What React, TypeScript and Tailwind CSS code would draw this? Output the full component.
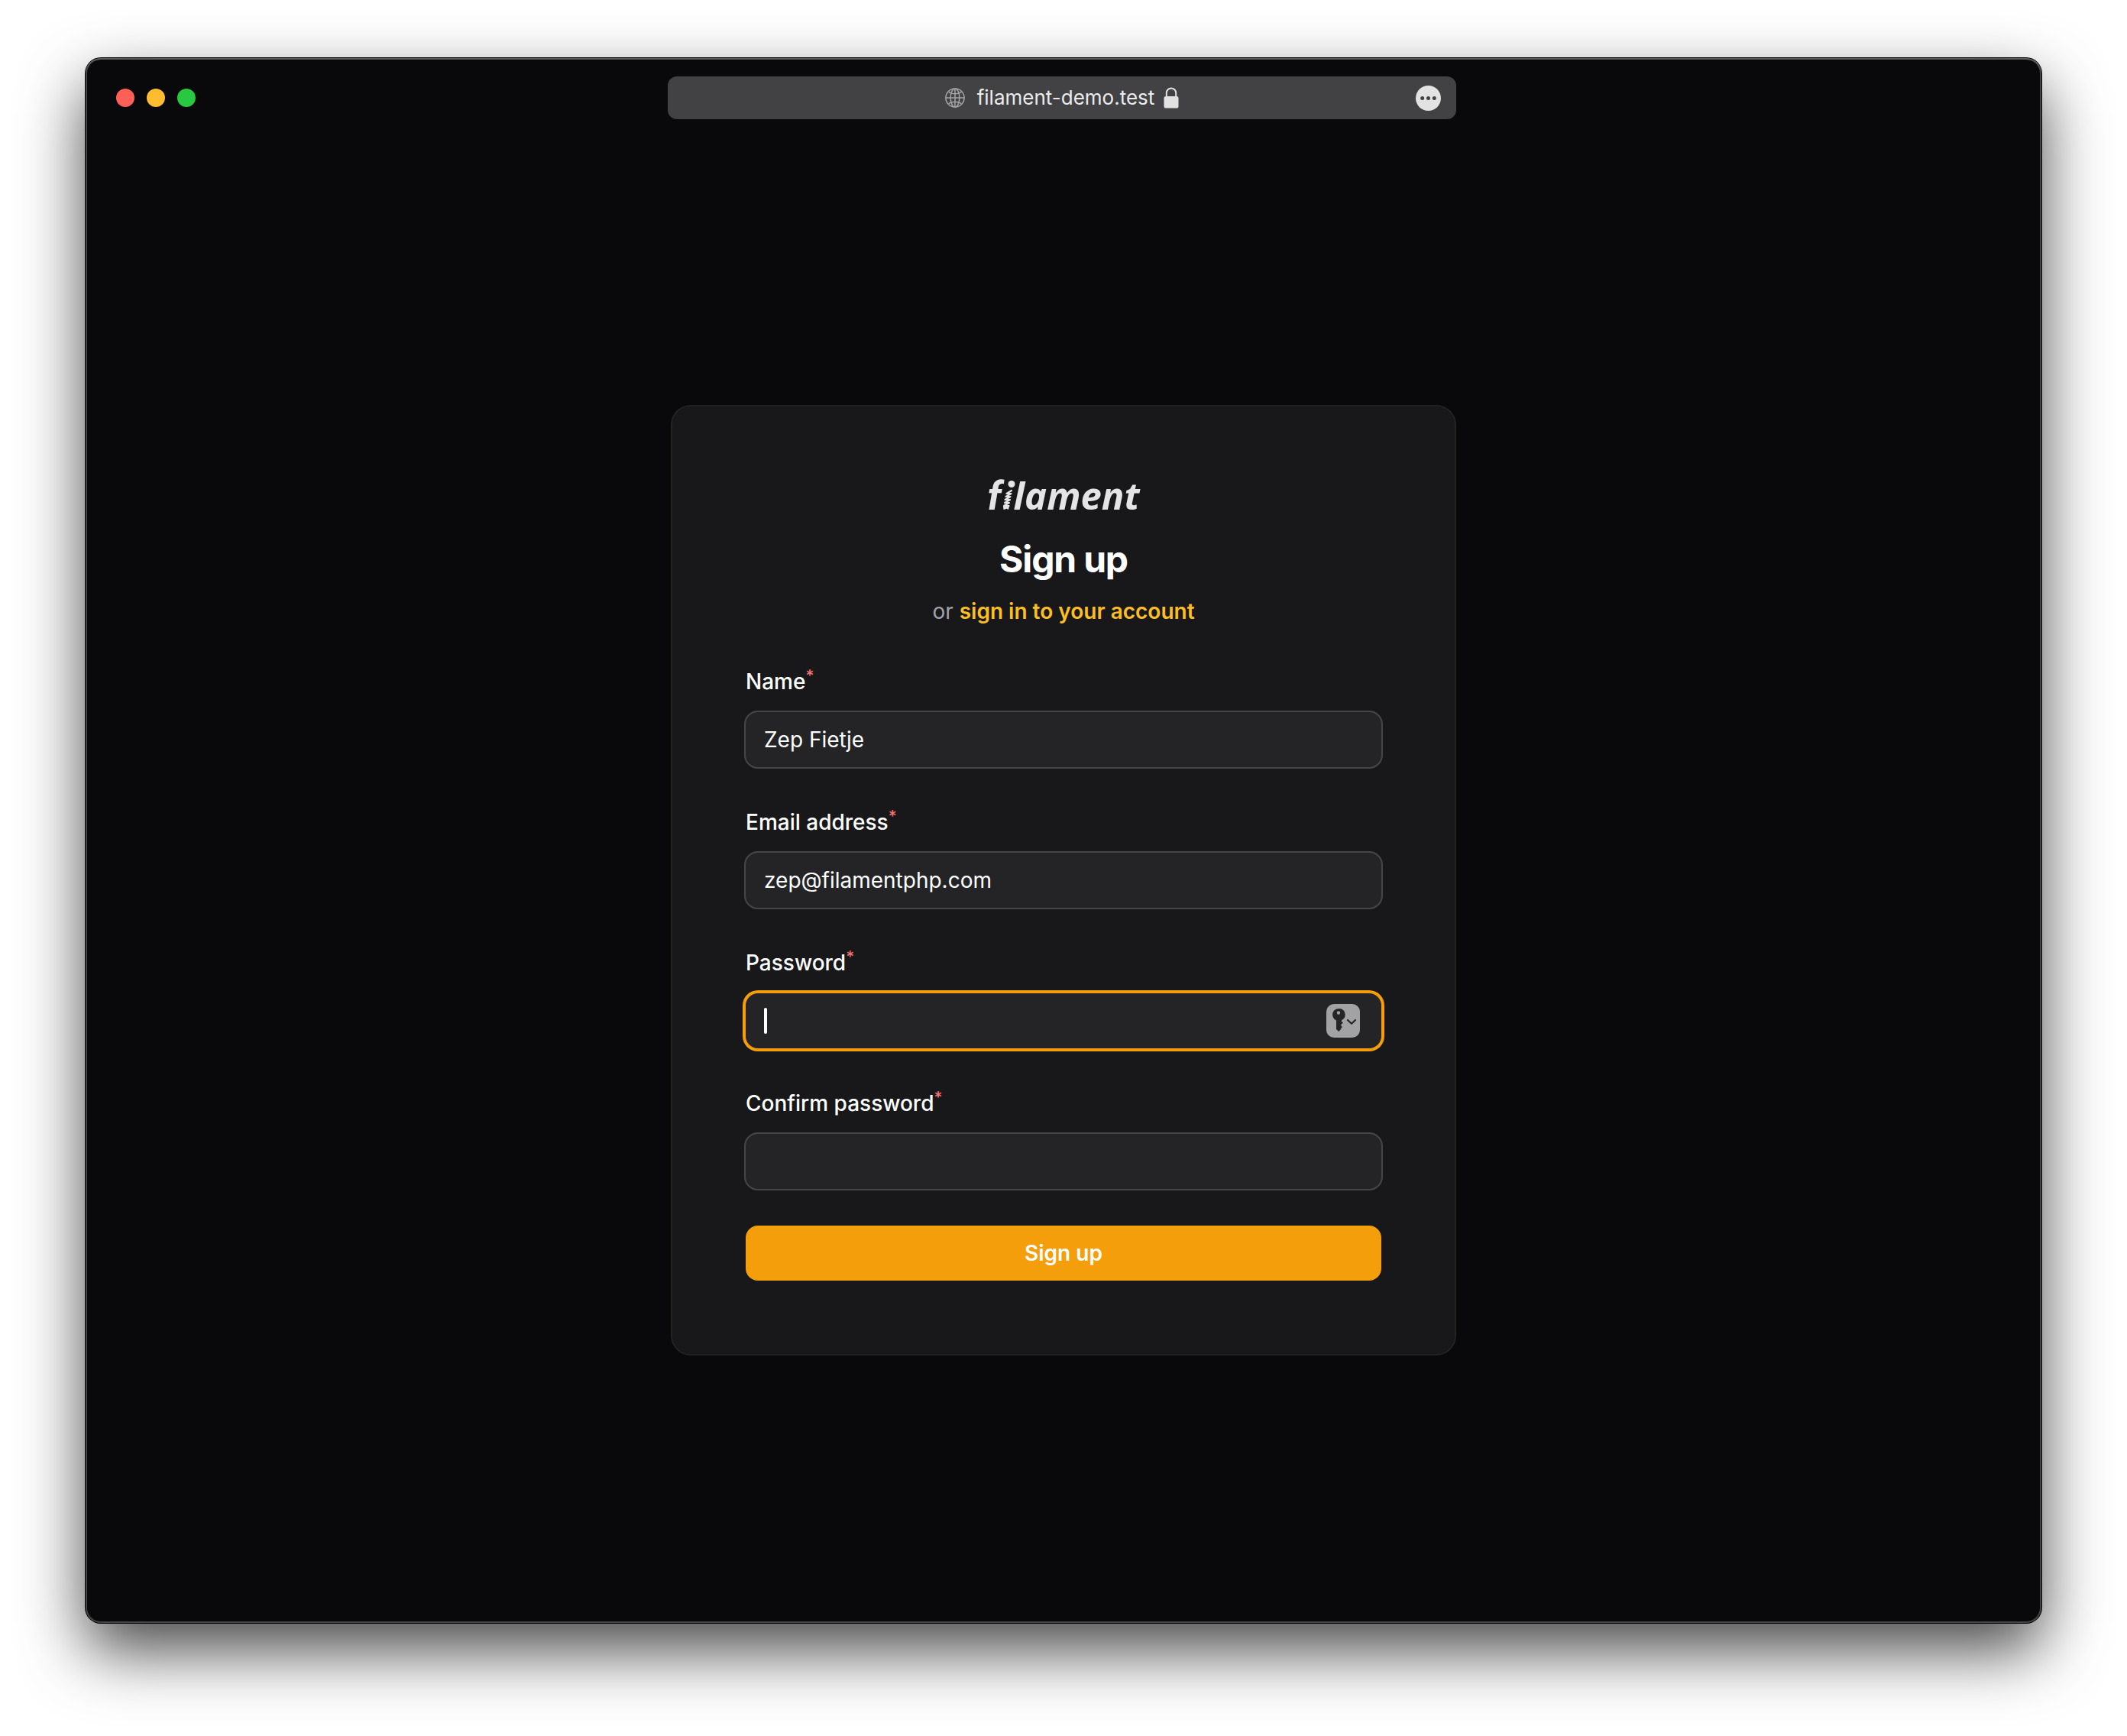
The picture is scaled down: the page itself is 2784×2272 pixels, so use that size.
import type { ReactNode } from "react";

const inputRing = "ring-2 ring-white/20 focus:ring-4 focus:ring-[#f59e0b]";
const activeRing = "ring-4 ring-[#f59e0b]";

function GlobeIcon() {
  return (
    <svg viewBox="0 0 26 26" className="size-[26px] text-[#a4a4a6]" fill="none" stroke="currentColor" strokeWidth="1.5" aria-hidden="true">
      <circle cx="13" cy="13" r="12.1" />
      <ellipse cx="13" cy="13" rx="5.8" ry="12.1" />
      <path d="M13 1v24M1 13h24M4 4.8c2.3 2 5.400 3 9 3s6.700-1 9-3M4 21.200c2.300-2 5.400-3 9-3s6.700 1 9 3" />
    </svg>
  );
}

function LockIcon() {
  return (
    <svg viewBox="0 0 20 28" className="h-7 w-5 text-[#e2e2e3]" aria-hidden="true">
      <path d="M3.800 13V7.600a6.200 6.200 0 0 1 12.400 0V13" fill="none" stroke="currentColor" strokeWidth="2" />
      <rect x="0.500" y="12" width="19" height="15.500" rx="2.600" fill="currentColor" />
    </svg>
  );
}

function MoreIcon() {
  return (
    <svg viewBox="0 0 33 33" className="size-[33px]" aria-hidden="true">
      <circle cx="16.500" cy="16.500" r="16.500" fill="#e2e2e3" />
      <g fill="#424244">
        <circle cx="8.700" cy="16.500" r="2.500" />
        <circle cx="16.500" cy="16.500" r="2.500" />
        <circle cx="24.300" cy="16.500" r="2.500" />
      </g>
    </svg>
  );
}

function KeyIcon() {
  return (
    <svg viewBox="0 0 44 44" className="size-11" aria-hidden="true">
      <path
        fillRule="evenodd"
        fill="#252528"
        d="M16 6a8 8 0 0 0-3 15.400V33l3.200 3 3-3v-1.400l1.800-1.400-1.800-2.200v-1l2.800-2.400-2.500-2.400 1.300-1.400A8 8 0 0 0 16 6Zm0 3.300a2.200 2.200 0 1 1 0 4.400 2.200 2.200 0 0 1 0-4.400Z"
      />
      <path d="m28 21 5 4.800 5-4.800" fill="none" stroke="#252528" strokeWidth="2.200" strokeLinecap="round" strokeLinejoin="round" />
    </svg>
  );
}

function Logo() {
  return (
    <div className="flex h-10 items-baseline justify-center leading-10 text-[#e4e4e7] italic" aria-label="filament">
      <span className="font-['Roboto',sans-serif] text-[52px] font-bold">f</span>
      <svg viewBox="0 0 16 38" className="h-[38px] w-4 overflow-visible" aria-hidden="true">
        <circle cx="13" cy="4.500" r="4.500" fill="currentColor" />
        <path
          d="M13 13 6.500 17 12.500 17 5.500 21 11.500 21 4.500 25 11 25 4 29 10 29 3 33 9.500 33 4 36.500"
          fill="none"
          stroke="currentColor"
          strokeWidth="2.200"
          strokeLinejoin="round"
          strokeLinecap="round"
        />
        <path d="M2 34 6 32.500l4 .5-1 5-3-1.500L2.500 38Z" fill="currentColor" />
      </svg>
      <span className="font-['Open_Sans',sans-serif] text-[49px] font-bold">lament</span>
    </div>
  );
}

type FieldProps = {
  id: string;
  label: string;
  type?: string;
  value?: string;
  active?: boolean;
  children?: ReactNode;
};

function Field({ id, label, type = "text", value, active = false, children }: FieldProps) {
  return (
    <div className="flex flex-col gap-4">
      <label htmlFor={id} className="h-12 text-[28px] leading-[48px] font-medium text-white">
        {label}
        <sup className="text-[21px] leading-none font-medium text-[#f87171]">*</sup>
      </label>
      <div className="relative">
        <input
          id={id}
          type={type}
          defaultValue={value}
          required
          className={`block h-[72px] w-full rounded-2xl bg-[#242427] px-6 text-[28px] leading-[48px] text-white outline-none ${active ? activeRing : inputRing}`}
        />
        {children}
      </div>
    </div>
  );
}

function TitleBar() {
  return (
    <header className="relative flex h-[104px] shrink-0 items-center justify-center pr-1">
      <div className="absolute left-10 flex gap-4">
        <button type="button" aria-label="Close" className="size-6 rounded-full bg-[#ff5f57]" />
        <button type="button" aria-label="Minimize" className="size-6 rounded-full bg-[#febc2e]" />
        <button type="button" aria-label="Zoom" className="size-6 rounded-full bg-[#28c840]" />
      </div>
      <div className="relative flex h-14 w-full max-w-[1032px] items-center justify-center rounded-xl bg-[#424244]">
        <GlobeIcon />
        <span className="mr-3 ml-4 text-[26px] leading-8 text-[#ececed]">filament-demo.test</span>
        <LockIcon />
        <button type="button" aria-label="Page menu" className="absolute right-5">
          <MoreIcon />
        </button>
      </div>
    </header>
  );
}

export default function App() {
  return (
    <div className="flex min-h-screen bg-white px-28 pt-[76px] pb-[148px] font-['Inter',sans-serif] antialiased">
      <div className="flex grow flex-col rounded-[20px] bg-[#09090b] shadow-[inset_0_2px_0_0_#5c5c5e,inset_0_0_0_2px_#444446,0_0_0_1px_#000,0_36px_84px_rgba(0,0,0,0.72)]">
        <TitleBar />
        <main className="flex grow items-center justify-center">
          <section className="w-full max-w-[1024px] rounded-3xl bg-[#18181b] p-24 ring-2 ring-white/10">
            <Logo />
            <h1 className="mt-8 text-center text-[48px] leading-[64px] font-bold tracking-tight text-white">Sign up</h1>
            <p className="mt-4 text-center text-[28px] leading-10 text-[#a1a1aa]">
              or{" "}
              <a href="#login" className="font-semibold text-[#fbbf24]">
                sign in to your account
              </a>
            </p>
            <form className="mt-12 flex flex-col gap-12" onSubmit={(event) => event.preventDefault()}>
              <Field id="name" label="Name" value="Zep Fietje" />
              <Field id="email" label="Email address" type="email" value="zep@filamentphp.com" />
              <Field id="password" label="Password" type="password" active>
                <span className="absolute top-[19px] left-6 h-[34px] w-1 rounded-sm bg-white" />
                <button type="button" aria-label="Fill password" className="absolute top-[14px] right-7 size-11 rounded-[10px] bg-[#a2a2a4]">
                  <KeyIcon />
                </button>
              </Field>
              <Field id="password-confirmation" label="Confirm password" type="password" />
              <button type="submit" className="h-[72px] rounded-2xl bg-[#f59e0b] text-[28px] leading-10 font-semibold text-white">
                Sign up
              </button>
            </form>
          </section>
        </main>
      </div>
    </div>
  );
}
